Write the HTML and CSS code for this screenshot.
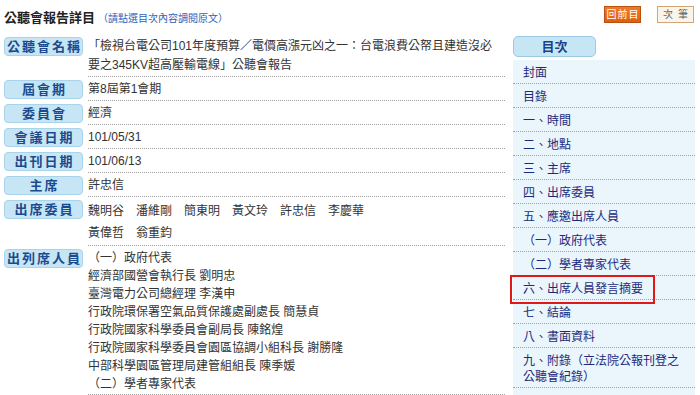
FILE: index.html
```html
<!DOCTYPE html>
<html lang="zh-Hant">
<head>
<meta charset="utf-8">
<title>公聽會報告詳目</title>
<link rel="stylesheet" href="styles.css">
</head>
<body>
<div class="page">
  <div class="topbar">
    <div class="title">公聽會報告詳目<span class="hint">（請點選目次內容調閱原文）</span></div>
    <div class="buttons">
      <span class="btn btn-back">回前目</span>
      <span class="btn btn-next">次 筆</span>
    </div>
  </div>
  <div class="main">
    <div class="details">
      <div class="row">
        <div class="label">公聽會名稱</div>
        <div class="value value-wrap">「檢視台電公司101年度預算／電價高漲元凶之一：台電浪費公帑且建造沒必要之345KV超高壓輸電線」公聽會報告</div>
      </div>
      <div class="row">
        <div class="label">屆會期</div>
        <div class="value">第8屆第1會期</div>
      </div>
      <div class="row">
        <div class="label">委員會</div>
        <div class="value">經濟</div>
      </div>
      <div class="row">
        <div class="label">會議日期</div>
        <div class="value">101/05/31</div>
      </div>
      <div class="row">
        <div class="label">出刊日期</div>
        <div class="value">101/06/13</div>
      </div>
      <div class="row">
        <div class="label">主席</div>
        <div class="value">許忠信</div>
      </div>
      <div class="row">
        <div class="label">出席委員</div>
        <div class="value value-names"><span class="name">魏明谷</span><span class="name">潘維剛</span><span class="name">簡東明</span><span class="name">黃文玲</span><span class="name">許忠信</span><span class="name">李慶華</span><span class="name">黃偉哲</span><span class="name">翁重鈞</span></div>
      </div>
      <div class="row">
        <div class="label">出列席人員</div>
        <div class="value value-list">
          <div>（一）政府代表</div>
          <div>經濟部國營會執行長 劉明忠</div>
          <div>臺灣電力公司總經理 李漢申</div>
          <div>行政院環保署空氣品質保護處副處長 簡慧貞</div>
          <div>行政院國家科學委員會副局長 陳銘煌</div>
          <div>行政院國家科學委員會園區協調小組科長 謝勝隆</div>
          <div>中部科學園區管理局建管組組長 陳季媛</div>
          <div>（二）學者專家代表</div>
        </div>
      </div>
    </div>
    <div class="toc">
      <div class="toc-head">目次</div>
      <ul class="toc-list">
        <li class="toc-item">封面</li>
        <li class="toc-item">目錄</li>
        <li class="toc-item">一、時間</li>
        <li class="toc-item">二、地點</li>
        <li class="toc-item">三、主席</li>
        <li class="toc-item">四、出席委員</li>
        <li class="toc-item">五、應邀出席人員</li>
        <li class="toc-item">（一）政府代表</li>
        <li class="toc-item">（二）學者專家代表</li>
        <li class="toc-item toc-marked">六、出席人員發言摘要<span class="mark"></span></li>
        <li class="toc-item">七、結論</li>
        <li class="toc-item">八、書面資料</li>
        <li class="toc-item">九、附錄（立法院公報刊登之公聽會紀錄）</li>
      </ul>
    </div>
  </div>
</div>
</body>
</html>
```
FILE: styles.css
```css
* { box-sizing: border-box; }
html, body { margin: 0; padding: 0; background: #fff; }
body {
  font-family: "Liberation Sans", "Noto Sans CJK TC", sans-serif;
  font-size: 12px;
  color: #333;
}
.page { width: 700px; overflow: hidden; }

.topbar {
  display: flex;
  justify-content: space-between;
  align-items: flex-start;
  height: 36px;
  padding: 6px 6px 0 4px;
}
.title {
  font-size: 13px;
  font-weight: bold;
  color: #222;
  line-height: 20px;
  margin-top: 2px;
}
.hint {
  font-size: 10px;
  font-weight: normal;
  color: #2a62b8;
  margin-left: 3px;
}
.buttons { display: flex; gap: 16px; }
.btn {
  display: flex;
  align-items: center;
  justify-content: center;
  width: 37px;
  height: 17px;
  font-size: 10px;
  letter-spacing: 1px;
  text-indent: 1px;
  line-height: 1;
  white-space: nowrap;
}
.btn-back {
  color: #fff;
  background: linear-gradient(#f07a2a, #de5f10);
  border: 1px solid #b8500e;
}
.btn-next {
  color: #666;
  background: #fbf4ea;
  border: 1px solid #d3a677;
}

.main {
  display: flex;
  gap: 8px;
  padding: 0 5px 0 4px;
}
.details { width: 501px; padding-top: 1px; }
.row {
  display: flex;
  gap: 5px;
  margin-bottom: 3px;
}
.label {
  flex: none;
  width: 79px;
  height: 19px;
  background: #c7e6f5;
  border: 1px solid #a8d3ea;
  border-radius: 4px;
  color: #1b4a8e;
  font-weight: bold;
  font-size: 13px;
  letter-spacing: 2px;
  text-indent: 2px;
  text-align: center;
  line-height: 17px;
  white-space: nowrap;
}
.value {
  flex: 1;
  line-height: 19px;
  padding-bottom: 1px;
  border-bottom: 1px dotted #a0a0a0;
}
.value-wrap { padding-right: 8px; }
.value-names { line-height: 22px; padding-right: 100px; }
.name { display: inline-block; margin-right: 12px; }
.value-list { line-height: 18px; }

.toc { width: 182px; }
.toc-head {
  width: 83px;
  height: 21px;
  margin-bottom: 3px;
  background: #c7e6f5;
  border: 1px solid #9ccae2;
  border-radius: 5px;
  color: #1b3f8b;
  font-weight: bold;
  font-size: 13px;
  text-align: center;
  line-height: 19px;
}
.toc-list {
  list-style: none;
  margin: 0;
  padding: 0 0 20px 0;
  background: #eaf5fc;
}
.toc-item {
  position: relative;
  padding: 5px 10px 2px 10px;
  line-height: 16px;
  color: #1c2a7c;
  border-bottom: 1px dotted #a0a0a0;
}
.mark {
  position: absolute;
  left: -3px;
  top: -1px;
  width: 145px;
  height: 29px;
  border: 2px solid #e01818;
}
```
